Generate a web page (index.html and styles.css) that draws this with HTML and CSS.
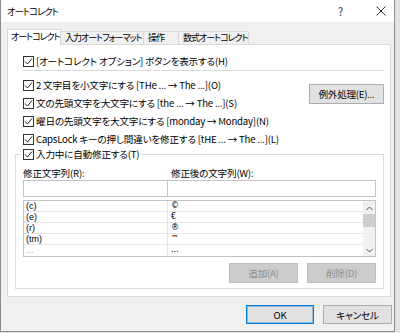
FILE: index.html
```html
<!DOCTYPE html>
<html lang="ja">
<head>
  <meta charset="UTF-8" />
  <title>オートコレクト</title>
  <link rel="stylesheet" href="styles.css">
</head>
<body>

  <div class="dialog">
    <div class="titlebar">
      <span class="title">オートコレクト</span>
      <span class="help">?</span>
      <span class="close">
        <svg width="10" height="10" viewBox="0 0 10 10"><path d="M0.5 0.5 L9.5 9.5 M9.5 0.5 L0.5 9.5" stroke="#333" stroke-width="1" fill="none"/></svg>
      </span>
    </div>

    <div class="content">
      <div class="tabs">
        <div class="tab active">オートコレクト</div>
        <div class="tab">入力オートフォーマット</div>
        <div class="tab">操作</div>
        <div class="tab">数式オートコレクト</div>
      </div>

      <div class="panel">
        <label class="check first"><span class="box"><svg width="9" height="9" viewBox="0 0 9 9"><path d="M1 4.5 L3.5 7 L8 1.5" stroke="#222" stroke-width="1" fill="none"/></svg></span>[オートコレクト オプション] ボタンを表示する(H)</label>
        <div class="sep"></div>

        <div class="options">
          <div class="option-list">
            <label class="check"><span class="box"><svg width="9" height="9" viewBox="0 0 9 9"><path d="M1 4.5 L3.5 7 L8 1.5" stroke="#222" stroke-width="1" fill="none"/></svg></span>2 文字目を小文字にする [THe ... → The ...](O)</label>
            <label class="check"><span class="box"><svg width="9" height="9" viewBox="0 0 9 9"><path d="M1 4.5 L3.5 7 L8 1.5" stroke="#222" stroke-width="1" fill="none"/></svg></span>文の先頭文字を大文字にする [the ... → The ...](S)</label>
            <label class="check"><span class="box"><svg width="9" height="9" viewBox="0 0 9 9"><path d="M1 4.5 L3.5 7 L8 1.5" stroke="#222" stroke-width="1" fill="none"/></svg></span>曜日の先頭文字を大文字にする [monday → Monday](N)</label>
            <label class="check"><span class="box"><svg width="9" height="9" viewBox="0 0 9 9"><path d="M1 4.5 L3.5 7 L8 1.5" stroke="#222" stroke-width="1" fill="none"/></svg></span>CapsLock キーの押し間違いを修正する [tHE ... → The ...](L)</label>
          </div>
          <button class="btn exceptions">例外処理(E)...</button>
        </div>

        <fieldset class="group">
          <legend><label class="check"><span class="box"><svg width="9" height="9" viewBox="0 0 9 9"><path d="M1 4.5 L3.5 7 L8 1.5" stroke="#222" stroke-width="1" fill="none"/></svg></span>入力中に自動修正する(T)</label></legend>

          <div class="fields">
            <div class="field-label">修正文字列(R):</div>
            <div class="field-label second">修正後の文字列(W):</div>
            <div class="input"></div>
            <div class="input"></div>
          </div>

          <div class="list">
            <div class="rows">
              <div class="row"><span class="col1">(c)</span><span class="col2">©</span></div>
              <div class="row"><span class="col1">(e)</span><span class="col2">€</span></div>
              <div class="row"><span class="col1">(r)</span><span class="col2">®</span></div>
              <div class="row"><span class="col1">(tm)</span><span class="col2">™</span></div>
              <div class="row cut"><span class="col1">...</span><span class="col2">...</span></div>
            </div>
            <div class="scrollbar">
              <svg width="7" height="5" viewBox="0 0 7 5"><path d="M0.5 4 L3.5 1 L6.5 4" stroke="#555" stroke-width="1" fill="none"/></svg>
              <div class="thumb"></div>
              <div class="track"></div>
              <svg width="7" height="5" viewBox="0 0 7 5"><path d="M0.5 1 L3.5 4 L6.5 1" stroke="#555" stroke-width="1" fill="none"/></svg>
            </div>
          </div>

          <div class="list-buttons">
            <button class="btn disabled">追加(A)</button>
            <button class="btn disabled">削除(D)</button>
          </div>
        </fieldset>
      </div>

      <div class="footer">
        <button class="btn ok">OK</button>
        <button class="btn cancel">キャンセル</button>
      </div>
    </div>
  </div>

</body>
</html>
```

FILE: styles.css
```css
body {
  margin: 0;
  background: #e2e2e2;
  font-family: "Noto Sans CJK JP", sans-serif;
  font-size: 9.6px;
  font-feature-settings: "palt";
  color: #000;
}

.dialog {
  width: 395px;
  height: 332px;
  box-sizing: border-box;
  border: 1px solid #8c8c8c;
  border-top: none;
  background: #f0f0f0;
  display: flex;
  flex-direction: column;
}

.titlebar {
  height: 22px;
  background: white;
  display: flex;
  align-items: center;
  padding-left: 6px;
}

.title {
  flex: 1;
  font-size: 9.4px;
  letter-spacing: -1px;
}

.help {
  width: 12px;
  font-size: 11px;
  color: #333;
  margin-right: 26px;
}

.close {
  display: flex;
  margin-right: 8px;
}

.content {
  flex: 1;
  padding: 7px 2px 0 6px;
  display: flex;
  flex-direction: column;
}

.tabs {
  display: flex;
  align-items: flex-end;
  height: 15px;
  margin-right: 1px;
}

.tab {
  height: 13px;
  line-height: 12px;
  padding: 0 3px 0 4px;
  border: 1px solid #d9d9d9;
  border-bottom: none;
  border-left: none;
  box-sizing: border-box;
  white-space: nowrap;
  font-size: 9px;
  letter-spacing: -1px;
}

.tab:first-child {
  border-left: 1px solid #d9d9d9;
}

.tab.active {
  height: 16px;
  line-height: 14px;
  background: white;
  margin-bottom: -1px;
  position: relative;
  z-index: 1;
  width: 54px;
  padding-left: 3px;
}

.tab:nth-child(2) { width: 83px; }
.tab:nth-child(3) { width: 35px; }
.tab:nth-child(4) { width: 70px; }

.panel {
  width: 384px;
  box-sizing: border-box;
  background: white;
  border: 1px solid #d9d9d9;
  padding: 7px 6px 7px 7px;
  letter-spacing: -0.2px;
}

.check {
  display: flex;
  align-items: center;
  height: 18px;
  white-space: nowrap;
}

.check.first,
.option-list .check {
  padding-left: 8px;
}

.box {
  width: 9px;
  height: 9px;
  border: 1px solid #333;
  margin-right: 2px;
  display: flex;
  background: white;
}

.sep {
  height: 1px;
  background: #d9d9d9;
  margin: 0 0 5px 8px;
}

.options {
  display: flex;
  justify-content: space-between;
  align-items: flex-start;
}

.btn {
  font-family: inherit;
  font-size: 9.6px;
  font-feature-settings: "palt";
  letter-spacing: -0.25px;
  color: #000;
  background: #e1e1e1;
  border: 1px solid #adadad;
  padding: 0;
  height: 20px;
  box-sizing: border-box;
}

.exceptions {
  width: 75px;
  margin-top: 8px;
}

.group {
  margin: 0;
  border: 1px solid #dcdcdc;
  padding: 0 7px 5px 7px;
}

.group legend {
  padding: 0 2px;
  margin-left: -2px;
}

.group legend .check {
  height: 12px;
}

.fields {
  display: grid;
  grid-template-columns: 145px 1fr;
  margin-top: 6px;
}

.field-label {
  height: 14px;
  line-height: 14px;
}

.field-label.second {
  padding-left: 3px;
}

.input {
  height: 17px;
  box-sizing: border-box;
  border: 1px solid #c3c3c3;
  background: white;
}

.input + .input {
  border-left: none;
}

.list {
  margin-top: 3px;
  height: 57px;
  box-sizing: border-box;
  border: 1px solid #c3c3c3;
  display: flex;
  overflow: hidden;
}

.rows {
  flex: 1;
}

.row {
  display: flex;
  height: 11px;
  line-height: 10px;
  font-family: "Liberation Sans", sans-serif;
  font-size: 9px;
  letter-spacing: 0;
  box-sizing: border-box;
  border-bottom: 1px solid #e6e6e6;
}

.row.cut {
  border-bottom: none;
}

.col1 {
  width: 144px;
  box-sizing: border-box;
  padding-left: 2px;
  border-right: 1px solid #e6e6e6;
}

.col2 {
  padding-left: 3px;
  font-family: "DejaVu Sans", sans-serif;
  font-size: 8px;
}

.row.cut .col1 {
  color: #9a9a9a;
}

.scrollbar {
  width: 12px;
  background: #f0f0f0;
  display: flex;
  flex-direction: column;
  align-items: center;
  padding: 5px 0 3px;
  box-sizing: border-box;
}

.thumb {
  width: 12px;
  height: 13px;
  background: #cdcdcd;
  margin-top: 3px;
}

.track {
  flex: 1;
}

.list-buttons {
  display: flex;
  justify-content: flex-end;
  gap: 9px;
  margin-top: 6px;
}

.btn.disabled {
  width: 69px;
  background: #cccccc;
  border-color: #bfbfbf;
  color: #8f8f8f;
}

.footer {
  display: flex;
  justify-content: flex-end;
  gap: 9px;
  padding-top: 8px;
}

.btn.ok {
  width: 68px;
  height: 19px;
  border-color: #0078d7;
  box-shadow: inset 0 0 0 1px rgba(0, 120, 215, 0.35);
}

.btn.cancel {
  width: 69px;
  height: 19px;
}
```
